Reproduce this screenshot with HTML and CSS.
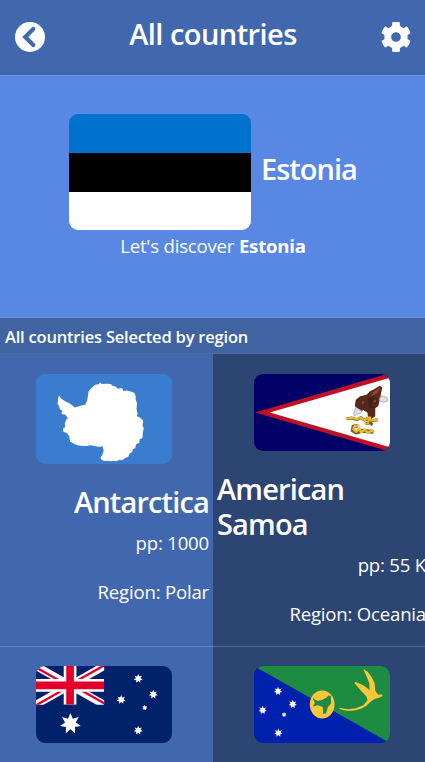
FILE: index.html
```html
<!DOCTYPE html>
<html lang="en">
<head>
<meta charset="utf-8">
<title>All countries</title>
<link rel="stylesheet" href="styles.css">
</head>
<body>
<svg class="defs" aria-hidden="true">
  <symbol id="star7" viewBox="-10 -10 20 20"><path d="M0-10 2.200-4.500 7.800-6.200 5-1 9.700 2.200 4.200 3.200 4.300 9 0 5.200-4.300 9-4.200 3.200-9.700 2.200-5-1-7.800-6.200-2.200-4.500Z" fill="#fff"/></symbol>
</svg>
<header class="topbar">
  <svg class="icon" viewBox="0 0 30 30"><circle cx="15" cy="15" r="15" fill="#fff"/><path d="M18.3 7 10.2 15.1 18.3 23.1" fill="none" stroke="#4168ae" stroke-width="4.2" stroke-linecap="round" stroke-linejoin="miter"/></svg>
  <h1 class="title">All countries</h1>
  <svg class="icon" viewBox="8 8 496 496"><path fill="#fff" d="M487.4 315.7l-42.6-24.6c4.3-23.2 4.3-47 0-70.2l42.6-24.6c4.9-2.8 7.1-8.6 5.5-14-11.1-35.6-30-67.8-54.7-94.6-3.8-4.1-10-5.1-14.8-2.3L380.8 110c-17.9-15.4-38.5-27.3-60.8-35.1V25.8c0-5.6-3.9-10.5-9.4-11.7-36.7-8.2-74.3-7.8-109.2 0-5.5 1.2-9.4 6.1-9.4 11.7V75c-22.2 7.9-42.8 19.8-60.8 35.1L88.7 85.5c-4.9-2.8-11-1.9-14.8 2.3-24.7 26.7-43.6 58.9-54.7 94.6-1.7 5.4.6 11.2 5.5 14L67.3 221c-4.3 23.2-4.3 47 0 70.2l-42.6 24.6c-4.9 2.8-7.1 8.6-5.5 14 11.1 35.6 30 67.8 54.7 94.6 3.8 4.1 10 5.1 14.8 2.3l42.6-24.6c17.9 15.4 38.5 27.3 60.8 35.1v49.2c0 5.6 3.9 10.5 9.4 11.7 36.7 8.2 74.3 7.8 109.2 0 5.5-1.2 9.4-6.1 9.4-11.7v-49.2c22.2-7.9 42.8-19.8 60.8-35.1l42.6 24.6c4.9 2.8 11 1.9 14.8-2.3 24.7-26.7 43.6-58.9 54.7-94.6 1.5-5.5-.7-11.3-5.6-14.1zM256 336c-44.1 0-80-35.9-80-80s35.9-80 80-80 80 35.9 80 80-35.9 80-80 80z"/></svg>
</header>
<section class="hero">
  <div class="hero-row">
    <svg class="hero-flag" viewBox="0 0 182 116" preserveAspectRatio="none"><path fill="#0072ce" d="M0 0h182v39H0z"/><path d="M0 39h182v39H0z"/><path fill="#fff" d="M0 78h182v38H0z"/></svg>
    <h2 class="name hero-name">Estonia</h2>
  </div>
  <p class="discover">Let's discover <b>Estonia</b></p>
</section>
<div class="region-bar">All countries Selected by region</div>
<main class="grid">
  <article class="card">
    <svg class="flag flag-tall" viewBox="34 41 406 269" preserveAspectRatio="none">
      <path fill="#3a7dce" d="M34 41h406v269H34z"/>
      <path fill="#fff" transform="translate(3 -2)" d="M99 107l8 10 12 8 14 7 14 11 16-5 15-3 6-14 4-26 8-10 12-10 10-1 4-6 5 5 14-1 13 1 5 5 9 2 8 7 12-2 4 9 10-2 14 4 9 4 4 10-1 8 5 13-2 15 3 16-2 7 8 3 8 7 3 4-2 15 4 8-3 10-1 18-8 3-2 12-9 4-3 12-7 3-2 9-7 3-5 11-9 3-8 7-9-2-9 5-9-2-8 2-10-2-8 1-9-3-4-6 7-11 3-12-4-13-8 3-12-2-15-3-10 2-14 0-15-2-12-5-10-6-3-16-6-9-6-2-7-5 1-8 6-3-1-10 4-12 5-5-7-10-8-2-4-2 3-8-7-4-4-12-4-5z"/>
    </svg>
    <div class="info">
      <h2 class="name">Antarctica</h2>
      <p class="meta">pp: 1000</p>
      <p class="meta region">Region: Polar</p>
    </div>
  </article>
  <article class="card dark">
    <svg class="flag" viewBox="28 26 406 231" preserveAspectRatio="none">
      <path fill="#006" d="M28 26h406v231H28z"/>
      <path fill="#c01026" d="M31 141.500 417 28 434 26V257L417 254Z"/>
      <path fill="#fff" d="M75 141.500 434 37V246Z"/>
      <path fill="#56291a" d="M403 61 411 66 407 85 405 98 399 122 390 129 390 153 379 160 368 153 367 142 354 134 347 140 334 132 329 120 332 103 345 93 364 88 374 78 389 70Z"/>
      <path fill="#8b4529" d="M408 63 396 84 375 94 383 80ZM389 100 393 109 379 117ZM352 105 358 111 350 118Z"/>
      <path fill="#291714" d="M367 99 390 90 378 101 398 97 378 109 394 112 375 119 389 126 371 129Z" opacity=".5"/>
      <path fill="#dce1e5" stroke="#8f9297" stroke-width="2" d="M403 97 411 92 425 97 427 107 414 111 402 105ZM333 126 350 137 346 144 336 146 330 152 326 147 328 137Z"/>
      <path fill="none" stroke="#795c20" stroke-width="9" d="M304 160 320 158 335 163 347 157 358 164 371 157 378 166 397 163M374 153 366 169M361 175 375 172 382 179"/>
      <path fill="none" stroke="#ebbd2b" stroke-width="6" d="M303 160 321 157 334 162 347 157 358 164 371 157 377 165 397 163M376 154 367 171M358 176 371 173"/>
      <path fill="none" stroke="#74602c" stroke-width="12" d="M338 181 325 184 323 195 333 202 352 196 367 198 385 199"/>
      <path fill="none" stroke="#ebbd35" stroke-width="7" d="M343 180 329 182 325 191 333 199 343 190 348 201 359 193 368 203 380 195 387 202"/>
    </svg>
    <div class="info">
      <h2 class="name wrap-name">American Samoa</h2>
      <p class="meta">pp: 55 K</p>
      <p class="meta region">Region: Oceania</p>
    </div>
  </article>
  <article class="card">
    <svg class="flag" viewBox="48 78 407 231" preserveAspectRatio="none">
      <path fill="#00226b" d="M48 78h407v231H48z"/>
      <svg x="48" y="78" width="204" height="116" viewBox="0 0 204 116">
        <path stroke="#fff" stroke-width="23" d="M0 0 204 116M204 0 0 116"/>
        <path stroke="#e4002b" stroke-width="7" d="M-2 3 100 61M104 55 206 113M206-3 104 55M100 61-2 119"/>
        <path stroke="#fff" stroke-width="38" d="M102 0V116M0 58H204"/>
        <path stroke="#e4002b" stroke-width="23" d="M102 0V116M0 58H204"/>
      </svg>
      <use href="#star7" x="119" y="219" width="64" height="64"/>
      <use href="#star7" x="340" y="101" width="28" height="30"/>
      <use href="#star7" x="289" y="164" width="28" height="30"/>
      <use href="#star7" x="385" y="148" width="28" height="30"/>
      <use href="#star7" x="340" y="256" width="28" height="30"/>
      <use href="#star7" x="365" y="194" width="17" height="18"/>
    </svg>
  </article>
  <article class="card dark">
    <svg class="flag" viewBox="42 78 407 231" preserveAspectRatio="none">
      <path fill="#0021ad" d="M42 78h407v231H42z"/>
      <path fill="#1e8b42" d="M42 78H449V309Z"/>
      <ellipse cx="246" cy="193.500" rx="37" ry="42" fill="#ffc639"/>
      <path fill="#1e8b42" d="M217 174 233 183 247 179 258 173 266 166 272 169 273 190 263 201 258 220 249 222 248 202 234 196 218 200 224 188Z"/>
      <path fill="#ffc639" d="M369 87 382 95 394 111 403 130 405 153 414 164 424 163 427 168 416 173 404 176 389 187 378 198 360 207 338 212 319 212 297 207 299 204 325 208 347 205 369 196 382 181 379 170 361 151 342 128 347 126 369 136 388 150 387 129 378 107Z"/>
      <use href="#star7" x="101" y="139" width="26" height="29"/>
      <use href="#star7" x="145" y="178" width="26" height="29"/>
      <use href="#star7" x="55" y="196" width="26" height="29"/>
      <use href="#star7" x="102" y="264" width="26" height="29"/>
      <use href="#star7" x="124" y="215" width="16" height="18"/>
    </svg>
  </article>
</main>
</body>
</html>
```

FILE: styles.css
```css
* { box-sizing: border-box; }
html, body { margin: 0; height: 100%; overflow: hidden; }
body {
  background: #4168ae;
  color: #fff;
  font-family: "Open Sans", "Noto Sans", sans-serif;
}
h1, h2, p { margin: 0; }
.defs { display: none; }
.topbar {
  display: flex;
  justify-content: space-between;
  height: 76px;
  padding: 22px 14px 0 15px;
  border-bottom: 1px solid #6f94d7;
}
.icon { width: 30px; height: 30px; flex: none; }
.title, .name {
  font-size: 29px;
  font-weight: 600;
  line-height: 35px;
  letter-spacing: -0.85px;
}
.title { margin-top: -6px; letter-spacing: -0.55px; white-space: nowrap; }
.hero {
  height: 242px;
  padding-top: 38px;
  background: #5887e4;
  border-bottom: 1px solid #6d94dc;
}
.hero-row { display: flex; align-items: center; gap: 10px; padding-left: 69px; }
.hero-flag { display: block; width: 182px; height: 116px; border-radius: 9px; flex: none; }
.hero-name { margin-top: -8px; letter-spacing: -1px; }
.discover {
  margin-top: 3px;
  padding-left: 1px;
  text-align: center;
  font-size: 18.6px;
  line-height: 26px;
  letter-spacing: -0.2px;
  white-space: nowrap;
}
.region-bar {
  height: 36px;
  padding-left: 5px;
  background: #4063a1;
  border-bottom: 1px solid #496ba8;
  font-size: 16.5px;
  font-weight: 600;
  line-height: 38px;
  letter-spacing: -0.2px;
  white-space: nowrap;
}
.grid { display: grid; grid-template-columns: 213px 212px; grid-template-rows: 293px 115px; }
.card {
  min-width: 0;
  padding: 20px 4px 0;
  border-bottom: 1px solid #6786be;
  overflow: hidden;
}
.card.dark { background: #2d4572; border-bottom-color: #586a92; }
.flag { display: block; width: 136px; height: 77px; margin-left: 32px; border-radius: 9px; }
.dark .flag { margin-left: 37px; }
.flag-tall { height: 90px; }
.grid .card:nth-child(n+3) { padding-top: 19px; border-bottom: 0; }
.info { margin-top: 20px; text-align: right; }
.dark .info { width: 209px; }
.wrap-name { width: 150px; text-align: left; }
.meta {
  margin-top: 10px;
  font-size: 18.6px;
  line-height: 27px;
  letter-spacing: -0.2px;
  white-space: nowrap;
}
.meta.region { margin-top: 22px; }
```
